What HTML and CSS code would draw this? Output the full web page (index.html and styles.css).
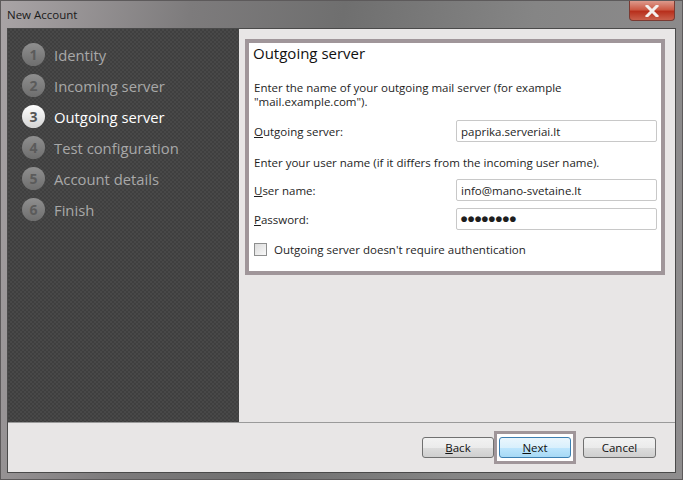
FILE: index.html
```html
<!DOCTYPE html>
<html lang="en">
<head>
<meta charset="UTF-8">
<title>New Account</title>
<link rel="stylesheet" href="styles.css">
</head>
<body>

<div class="window">
    <div class="titlebar">
        <span class="title">New Account</span>
        <div class="close-btn">
            <svg width="14" height="12" viewBox="0 0 14 12">
                <path d="M2 1 L12 11 M12 1 L2 11" stroke="#fff" stroke-width="3" stroke-linecap="square"/>
            </svg>
        </div>
    </div>

    <div class="client">
        <div class="main">
            <ul class="steps">
                <li class="step"><span class="num">1</span>Identity</li>
                <li class="step"><span class="num">2</span>Incoming server</li>
                <li class="step active"><span class="num">3</span>Outgoing server</li>
                <li class="step"><span class="num">4</span>Test configuration</li>
                <li class="step"><span class="num">5</span>Account details</li>
                <li class="step"><span class="num">6</span>Finish</li>
            </ul>

            <div class="content">
                <div class="page-box">
                    <h1 class="page-title">Outgoing server</h1>
                    <p class="hint">Enter the name of your outgoing mail server (for example<br>"mail.example.com").</p>
                    <div class="field first">
                        <label><u>O</u>utgoing server:</label>
                        <div class="input">paprika.serveriai.lt</div>
                    </div>
                    <p class="hint second">Enter your user name (if it differs from the incoming user name).</p>
                    <div class="field">
                        <label><u>U</u>ser name:</label>
                        <div class="input">info@mano-svetaine.lt</div>
                    </div>
                    <div class="field">
                        <label><u>P</u>assword:</label>
                        <div class="input dots">●●●●●●●●</div>
                    </div>
                    <div class="check-row">
                        <span class="checkbox"></span>
                        <span>Outgoing server doesn't require authentication</span>
                    </div>
                </div>
            </div>
        </div>

        <div class="footer">
            <div class="btn back"><u>B</u>ack</div>
            <div class="focus-ring">
                <div class="btn primary"><u>N</u>ext</div>
            </div>
            <div class="btn">Cancel</div>
        </div>
    </div>
</div>

</body>
</html>
```

FILE: styles.css
```css
body {
    margin: 0;
    font-family: "Open Sans", "Noto Sans", sans-serif;
    background-color: #777;
}

.window {
    width: 683px;
    height: 480px;
    box-sizing: border-box;
    display: flex;
    flex-direction: column;
    background: linear-gradient(100deg, #a9a4a6 0%, #7d7b7c 25%, #6f6f6f 45%, #858585 70%, #8f8d8e 100%);
    border: 1px solid #5d5a5b;
}

.titlebar {
    height: 27px;
    display: flex;
    align-items: flex-start;
    justify-content: space-between;
    padding-left: 6px;
}

.title {
    font-size: 11.5px;
    color: #1a1a1a;
    margin-top: 6px;
}

.close-btn {
    width: 44px;
    height: 19px;
    margin-right: 7px;
    display: flex;
    align-items: center;
    justify-content: center;
    border: 1px solid #7a3a32;
    border-top: none;
    border-radius: 0 0 4px 4px;
    background: linear-gradient(#dd9a8c 0%, #cc5a45 45%, #b8301d 55%, #c9604c 100%);
}

.close-btn svg path {
    stroke: #f4f0ee;
}

.client {
    flex: 1;
    margin: 0 6px 6px 6px;
    display: flex;
    flex-direction: column;
    border: 1px solid #4a4a4a;
    background-color: #e8e6e6;
}

.main {
    flex: 1;
    display: flex;
}

.steps {
    width: 231px;
    margin: 0;
    padding: 10px 0 0 14px;
    box-sizing: border-box;
    list-style: none;
    background-color: #444;
    background-image: repeating-conic-gradient(#484848 0 25%, #3f3f3f 0 50%);
    background-size: 4px 4px;
}

.step {
    height: 31px;
    display: flex;
    align-items: center;
    font-size: 14.8px;
    color: #a8a8a8;
}

.num {
    width: 23px;
    height: 23px;
    margin-right: 9px;
    border-radius: 50%;
    display: flex;
    align-items: center;
    justify-content: center;
    font-size: 14px;
    font-weight: bold;
    color: #5b5b5b;
    background: linear-gradient(#8f8f8f, #6e6e6e);
}

.step.active {
    color: #fff;
}

.step.active .num {
    color: #555;
    background: linear-gradient(#ffffff, #d4d4d4);
}

.content {
    flex: 1;
    padding: 10px 10px 0 6px;
}

.page-box {
    height: 236px;
    box-sizing: border-box;
    background-color: #fff;
    border: 4px solid #a0969a;
    padding: 0 4px 0 4px;
    font-size: 11.5px;
    color: #1e1e1e;
}

.page-title {
    margin: 0;
    font-size: 15px;
    font-weight: normal;
    color: #111;
}

.hint {
    margin: 18px 0 0 1px;
    line-height: 14px;
}

.hint.second {
    margin-top: 14px;
    margin-bottom: 9px;
}

.field {
    display: flex;
    align-items: center;
    margin-top: 7px;
}

.field.first {
    margin-top: 11px;
}

.field label {
    width: 202px;
    padding-left: 1px;
}

.input {
    flex: 1;
    height: 22px;
    box-sizing: border-box;
    border: 1px solid #c8c8c8;
    border-radius: 2px;
    padding: 3px 0 0 4px;
    font-size: 11.5px;
}

.input.dots {
    font-size: 13.5px;
    letter-spacing: -1.2px;
    padding-top: 0;
    padding-left: 3px;
}

.check-row {
    display: flex;
    align-items: center;
    margin-top: 12px;
    padding-left: 1px;
}

.checkbox {
    width: 11px;
    height: 11px;
    margin-right: 7px;
    border: 1px solid #8e8f8f;
    background: linear-gradient(135deg, #dcdcdc, #f8f8f8);
}

.footer {
    height: 49px;
    border-top: 1px solid #9a9a9a;
    display: flex;
    align-items: center;
    justify-content: flex-end;
    padding-right: 19px;
}

.btn {
    width: 73px;
    height: 21px;
    box-sizing: border-box;
    border: 1px solid #707070;
    border-radius: 3px;
    display: flex;
    align-items: center;
    justify-content: center;
    font-size: 11.5px;
    color: #111;
    background: linear-gradient(#f2f2f2 0%, #ebebeb 50%, #dddddd 51%, #cfcfcf 100%);
}

.btn.back {
    width: 72px;
}

.focus-ring {
    margin-right: 7px;
    padding: 3px 2px;
    border: 3px solid #a0969a;
    background-color: #fff;
}

.btn.primary {
    width: 72px;
    border-color: #3c7fb1;
    background: linear-gradient(#eaf6fd 0%, #d9f0fc 50%, #bee6fd 51%, #a7d9f5 100%);
}
```
